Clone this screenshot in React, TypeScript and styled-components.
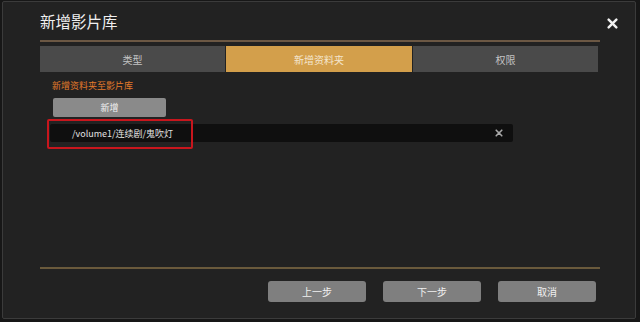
import React, { useState } from 'react';
import styled, { createGlobalStyle } from 'styled-components';

const GlobalStyle = createGlobalStyle`
  html, body {
    margin: 0;
    padding: 0;
    background: #171717;
    font-family: "Noto Sans CJK SC", "Noto Sans", sans-serif;
    overflow: hidden;
  }
`;

const Dialog = styled.div`
  box-sizing: border-box;
  width: 634px;
  height: 318px;
  margin: 1px 0 0 2px;
  border: 1px solid #3b3b3b;
  border-radius: 2px;
  background: #222222;
  display: flex;
  flex-direction: column;
`;

const Header = styled.div`
  height: 38px;
  padding: 0 16px 0 37px;
  display: flex;
  align-items: center;
  justify-content: space-between;
`;

const Title = styled.div`
  color: #f0f0f0;
  font-size: 15.5px;
  line-height: 20px;
  margin-top: -1px;
`;

const CloseButton = styled.button`
  width: 14px;
  height: 14px;
  padding: 0;
  border: none;
  background: none;
  display: flex;
  align-items: center;
  justify-content: center;
  cursor: pointer;
  margin-top: 4px;
`;

const Body = styled.div`
  flex: 1;
  display: flex;
  flex-direction: column;
  padding: 0 35px 0 37px;
`;

const Rule = styled.div<{ $color: string }>`
  height: 2px;
  background: ${(p) => p.$color};
`;

const TabBar = styled.div`
  margin-top: 4px;
  display: grid;
  grid-template-columns: 185px 186px 185px;
  gap: 1px;
  height: 26px;
`;

const Tab = styled.div<{ $active?: boolean }>`
  background: ${(p) => (p.$active ? '#d39f4b' : '#4a4a4a')};
  color: ${(p) => (p.$active ? '#f3e6cf' : '#c4c4c4')};
  font-size: 10px;
  display: flex;
  align-items: center;
  justify-content: center;
  cursor: pointer;
`;

const Hint = styled.div`
  margin: 6px 0 0 12px;
  color: #e27a2b;
  font-size: 9px;
  line-height: 15px;
`;

const AddButton = styled.button`
  margin: 5px 0 0 13px;
  width: 113px;
  height: 19px;
  border: none;
  border-radius: 2px;
  background: #8a8a8a;
  color: #f2f2f2;
  font-family: inherit;
  font-size: 9px;
  padding: 0;
`;

const PathRow = styled.div`
  position: relative;
  margin: 7px 0 0 10px;
  width: 463px;
  height: 18px;
  background: #0f0f0f;
  border-radius: 2px;
  display: flex;
  align-items: center;
  justify-content: space-between;
  padding: 0 10px 0 22px;
  box-sizing: border-box;
`;

const PathText = styled.span`
  color: #e2e2e2;
  font-size: 9px;
`;

const RemoveIcon = styled.span`
  display: flex;
  align-items: center;
`;

const Highlight = styled.div`
  position: absolute;
  left: -3px;
  top: -5px;
  width: 146px;
  height: 30px;
  box-sizing: border-box;
  border: 2px solid #c8161d;
  border-radius: 2px;
  pointer-events: none;
`;

const Spacer = styled.div`
  flex: 1;
`;

const Footer = styled.div`
  display: flex;
  justify-content: flex-end;
  gap: 17px;
  padding: 12px 4px 16px 0;
`;

const FooterButton = styled.button`
  width: 98px;
  height: 21px;
  border: none;
  border-radius: 3px;
  background: #7f7f7f;
  color: #f0f0f0;
  font-family: inherit;
  font-size: 10px;
  padding: 0;
`;

const Cross: React.FC<{ size: number; color: string; weight: number }> = ({ size, color, weight }) => (
  <svg width={size} height={size} viewBox="0 0 10 10">
    <path d="M1.5 1.5 L8.5 8.5 M8.5 1.5 L1.5 8.5" stroke={color} strokeWidth={weight} strokeLinecap="round" />
  </svg>
);

const tabs = ['类型', '新增资料夹', '权限'];

export default function App() {
  const [active, setActive] = useState(1);

  return (
    <>
      <GlobalStyle />
      <Dialog>
        <Header>
          <Title>新增影片库</Title>
          <CloseButton>
            <Cross size={11} color="#f2f2f2" weight={2.2} />
          </CloseButton>
        </Header>
        <Body>
          <Rule $color="#6c5844" />
          <TabBar>
            {tabs.map((t, i) => (
              <Tab key={t} $active={i === active} onClick={() => setActive(i)}>
                {t}
              </Tab>
            ))}
          </TabBar>
          <Hint>新增资料夹至影片库</Hint>
          <AddButton>新增</AddButton>
          <PathRow>
            <PathText>/volume1/连续剧/鬼吹灯</PathText>
            <RemoveIcon>
              <Cross size={8} color="#a8a8a8" weight={2} />
            </RemoveIcon>
            <Highlight />
          </PathRow>
          <Spacer />
          <Rule $color="#6a5a3c" />
          <Footer>
            <FooterButton>上一步</FooterButton>
            <FooterButton>下一步</FooterButton>
            <FooterButton>取消</FooterButton>
          </Footer>
        </Body>
      </Dialog>
    </>
  );
}
